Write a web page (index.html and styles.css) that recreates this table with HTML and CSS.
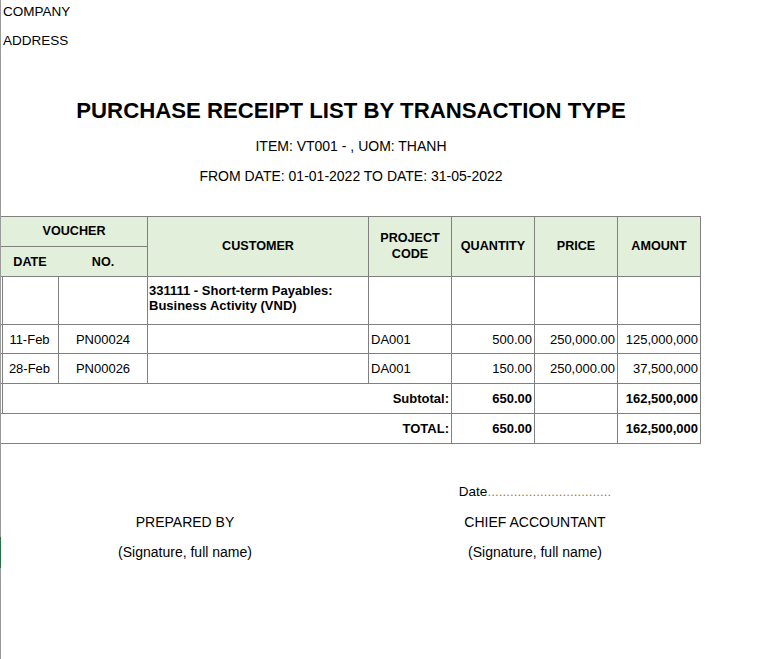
FILE: index.html
```html
<!DOCTYPE html>
<html>
<head>
<meta charset="utf-8">
<link rel="stylesheet" href="styles.css">
</head>
<body>
<div class="page">
  <div class="sheet">
    <div class="company">COMPANY</div>
    <div class="address">ADDRESS</div>
    <h1 class="title">PURCHASE RECEIPT LIST BY TRANSACTION TYPE</h1>
    <div class="subtitle first">ITEM: VT001 - , UOM: THANH</div>
    <div class="subtitle">FROM DATE: 01-01-2022 TO DATE: 31-05-2022</div>

    <div class="grid">
      <div class="c h voucher">VOUCHER</div>
      <div class="c h customer">CUSTOMER</div>
      <div class="c h project">PROJECT<br>CODE</div>
      <div class="c h tall q">QUANTITY</div>
      <div class="c h tall p">PRICE</div>
      <div class="c h tall a">AMOUNT</div>
      <div class="c h date">DATE</div>
      <div class="c h no">NO.</div>

      <div class="c first-col"></div>
      <div class="c"></div>
      <div class="c account">331111 - Short-term Payables:<br>Business Activity (VND)</div>
      <div class="c"></div>
      <div class="c"></div>
      <div class="c"></div>
      <div class="c"></div>

      <div class="c first-col center">11-Feb</div>
      <div class="c center">PN00024</div>
      <div class="c"></div>
      <div class="c left">DA001</div>
      <div class="c num">500.00</div>
      <div class="c num">250,000.00</div>
      <div class="c num">125,000,000</div>

      <div class="c first-col center">28-Feb</div>
      <div class="c center">PN00026</div>
      <div class="c"></div>
      <div class="c left">DA001</div>
      <div class="c num">150.00</div>
      <div class="c num">250,000.00</div>
      <div class="c num">37,500,000</div>

      <div class="c first-col label bold">Subtotal:</div>
      <div class="c num bold">650.00</div>
      <div class="c"></div>
      <div class="c num bold">162,500,000</div>

      <div class="c label bold">TOTAL:</div>
      <div class="c num bold">650.00</div>
      <div class="c"></div>
      <div class="c num bold">162,500,000</div>
    </div>

    <div class="footer">
      <div class="sig-right date-line">Date<span class="dots">.................................</span></div>
      <div class="sig-left row2">PREPARED BY</div>
      <div class="sig-right row2">CHIEF ACCOUNTANT</div>
      <div class="sig-left row3">(Signature, full name)</div>
      <div class="sig-right row3">(Signature, full name)</div>
    </div>
  </div>
  <div class="row-marker"></div>
</div>
</body>
</html>
```

FILE: styles.css
```css
html, body {
  margin: 0;
  padding: 0;
  background: #ffffff;
}

body {
  font-family: "Liberation Sans", Arial, sans-serif;
  font-size: 13px;
  color: #000000;
}

.page {
  position: relative;
  min-height: 659px;
  border-left: 1px solid #9a9a9a;
  box-sizing: border-box;
}

.sheet {
  width: 700px;
}

.company {
  height: 24px;
  line-height: 24px;
  padding-left: 2px;
  font-size: 13.5px;
}

.address {
  margin-top: 5px;
  height: 24px;
  line-height: 24px;
  padding-left: 2px;
  font-size: 13.5px;
}

.title {
  margin: 43px 0 0;
  font-size: 22.2px;
  line-height: 30px;
  font-weight: bold;
  text-align: center;
}

.subtitle {
  line-height: 30px;
  font-size: 14px;
  text-align: center;
}

.subtitle.first {
  margin-top: 5px;
}

.grid {
  margin-top: 25px;
  display: grid;
  grid-template-columns: 58px 89px 221px 83px 83px 83px 83px;
  grid-template-rows: 30px 30px 48px 29px 30px 30px 30px;
  border-top: 1px solid #808080;
}

.c {
  box-sizing: border-box;
  border-right: 1px solid #808080;
  border-bottom: 1px solid #808080;
  display: flex;
  align-items: center;
  white-space: nowrap;
}

.h {
  background: #e2efda;
  font-weight: bold;
  font-size: 12.6px;
  justify-content: center;
  text-align: center;
}

.voucher {
  grid-column: 1 / 3;
  grid-row: 1;
  padding-bottom: 1px;
}

.customer {
  grid-column: 3;
  grid-row: 1 / 3;
  padding-bottom: 1px;
}

.project {
  grid-column: 4;
  grid-row: 1 / 3;
  line-height: 16px;
  padding-bottom: 2px;
}

.tall {
  grid-row: 1 / 3;
  padding-bottom: 1px;
}

.q { grid-column: 5; }
.p { grid-column: 6; }
.a { grid-column: 7; }

.date {
  grid-column: 1;
  grid-row: 2;
  border-right: none;
}

.no {
  grid-column: 2;
  grid-row: 2;
}

.first-col {
  box-shadow: inset 1px 0 0 #ffffff, inset 2px 0 0 #808080;
}

.account {
  font-weight: bold;
  line-height: 15px;
  align-items: flex-start;
  padding-top: 6px;
  padding-left: 1px;
}

.center {
  justify-content: center;
}

.left {
  padding-left: 2px;
}

.num {
  justify-content: flex-end;
  padding-right: 2px;
}

.label {
  grid-column: 1 / 5;
  justify-content: flex-end;
  padding-right: 2px;
}

.bold {
  font-weight: bold;
}

.footer {
  margin-top: 33px;
  display: grid;
  grid-template-columns: 368px 83px 166px;
  grid-template-rows: 30px 30px 30px;
  line-height: 30px;
  font-size: 14px;
  text-align: center;
}

.sig-left {
  grid-column: 1;
}

.sig-right {
  grid-column: 3;
}

.date-line {
  grid-row: 1;
  font-size: 13.5px;
}

.row2 { grid-row: 2; }
.row3 { grid-row: 3; }

.dots {
  color: #b07d2b;
}

.row-marker {
  position: absolute;
  left: -1px;
  top: 537px;
  width: 1px;
  height: 31px;
  background: #217346;
}
```
